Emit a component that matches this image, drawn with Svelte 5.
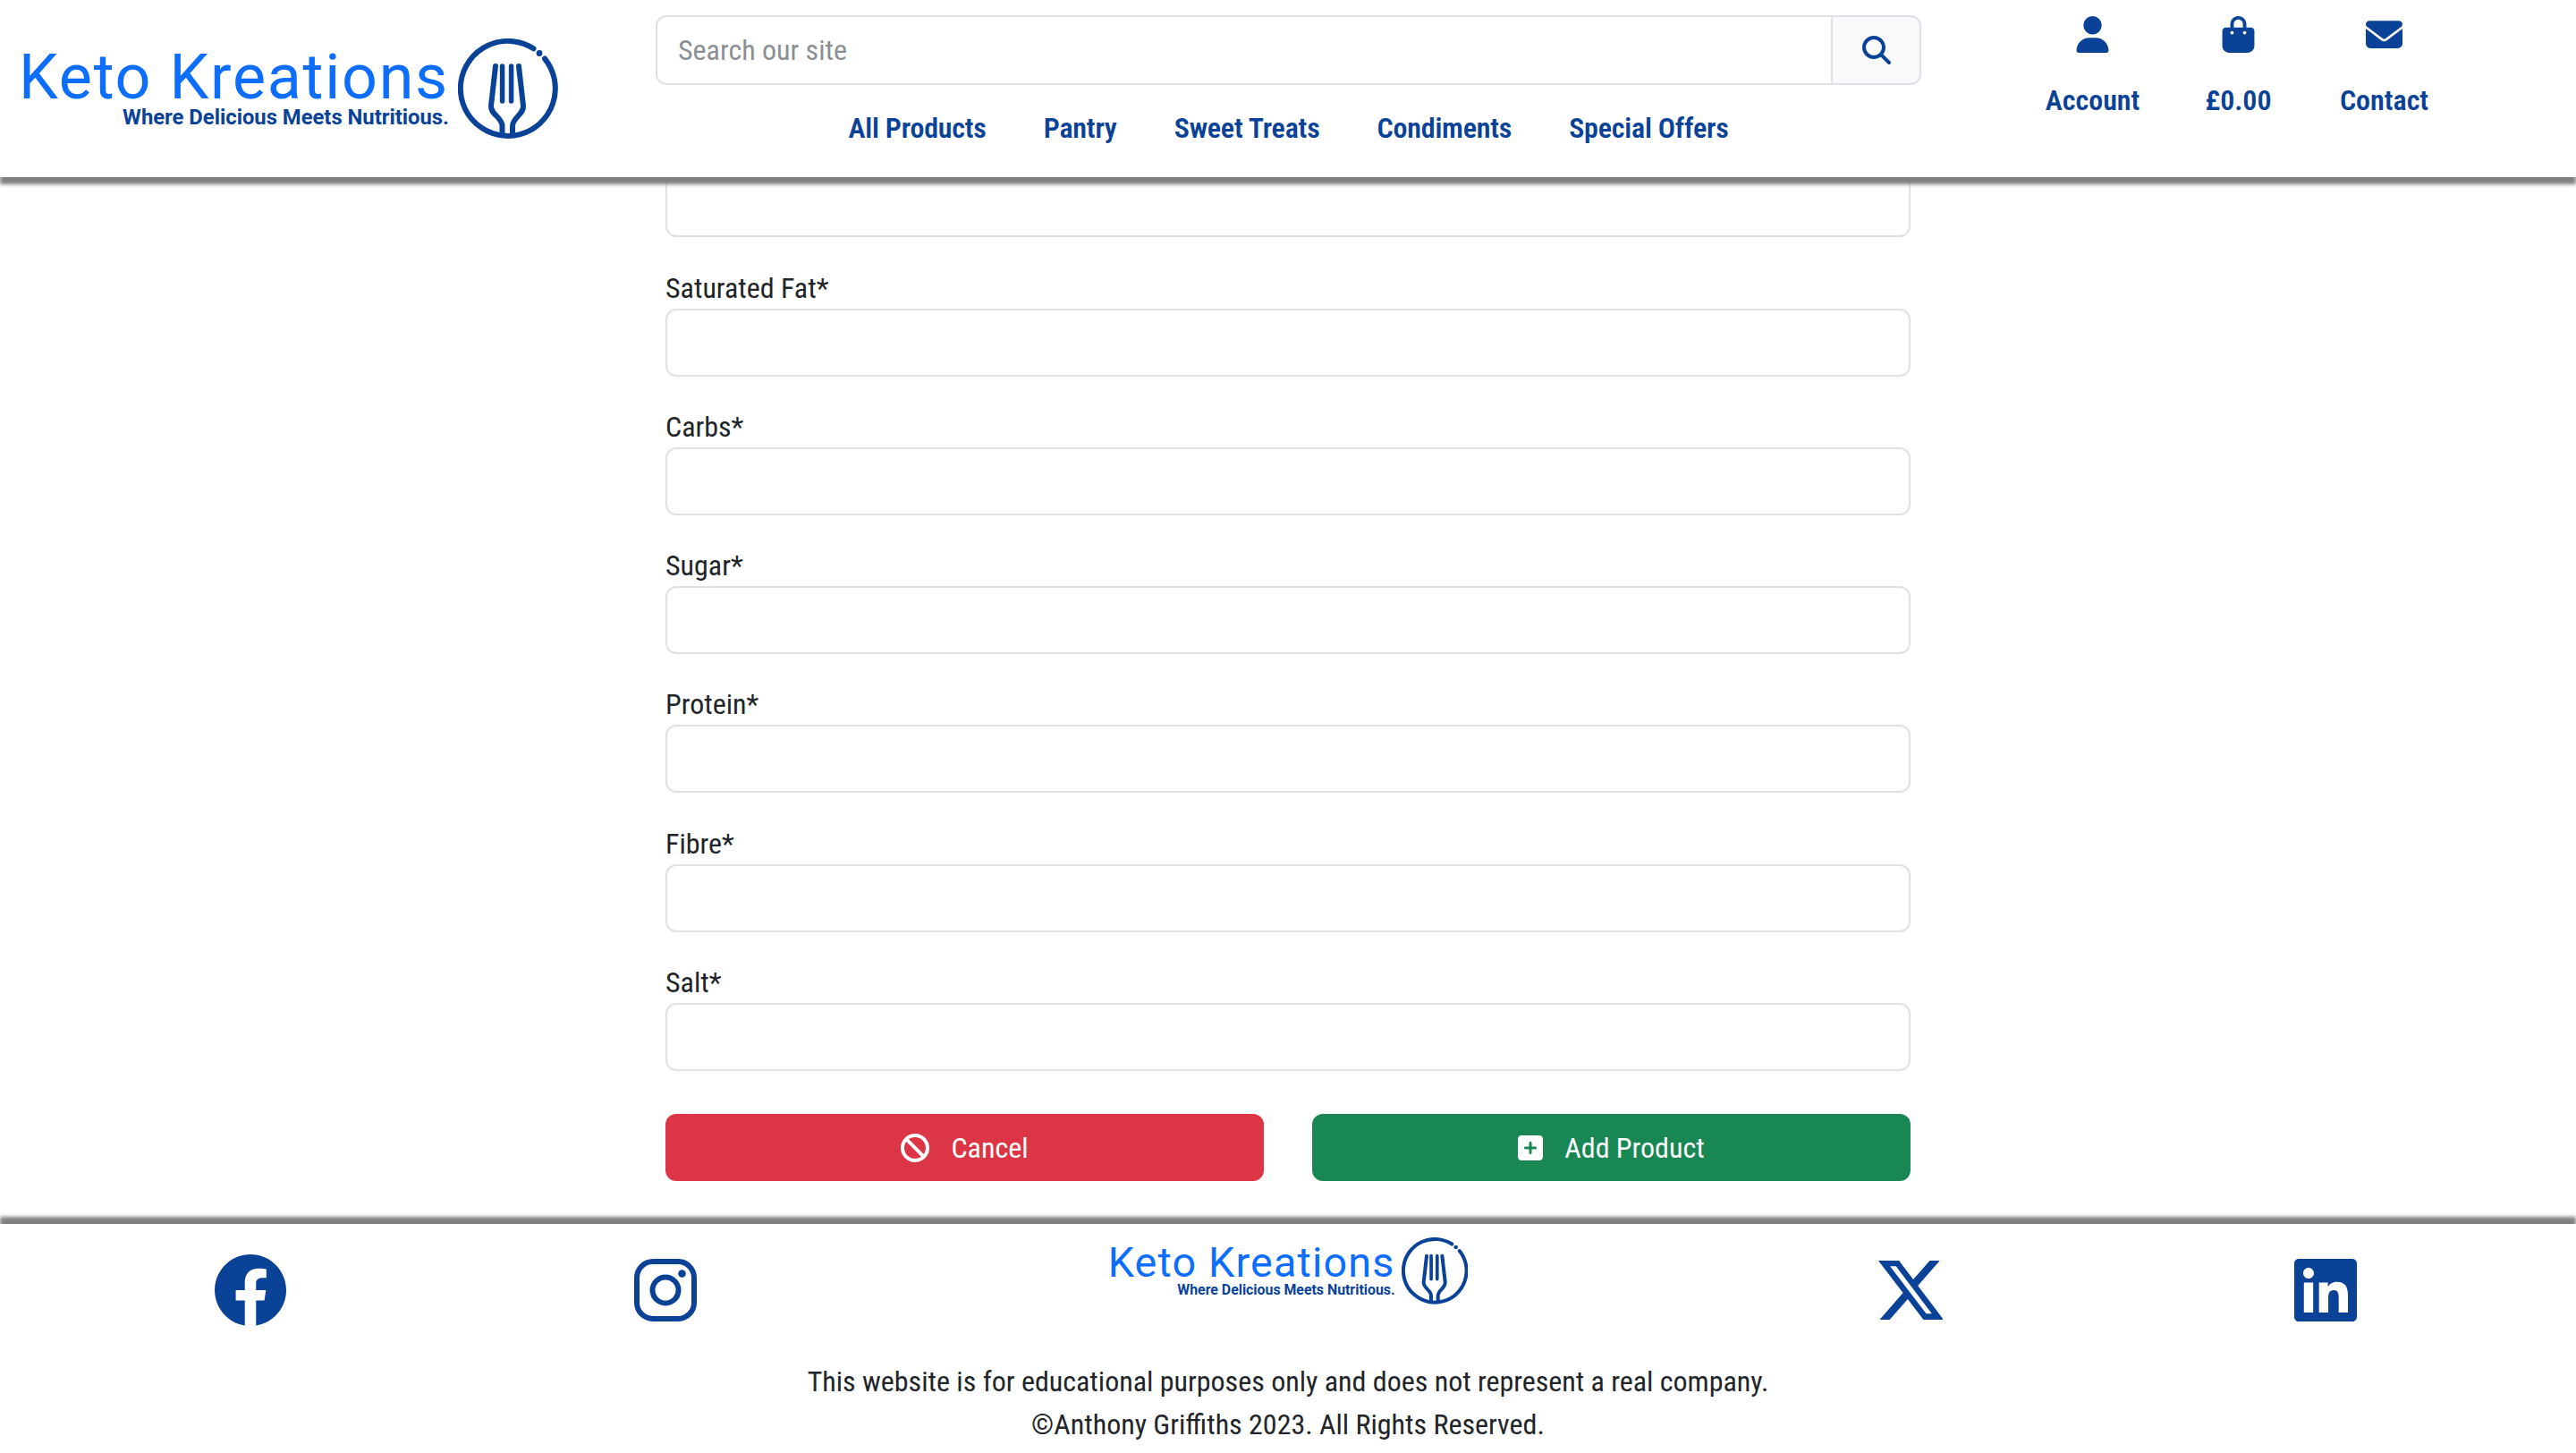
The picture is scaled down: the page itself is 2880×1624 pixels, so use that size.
<script lang="ts">
  const navLinks = ["All Products", "Pantry", "Sweet Treats", "Condiments", "Special Offers"];
  const fields = ["Saturated Fat*", "Carbs*", "Sugar*", "Protein*", "Fibre*", "Salt*"];
</script>

{#snippet logo(size)}
  <a class="logo {size}" href="#top">
    <span class="logo-text">
      <span class="logo-name">Keto Kreations</span>
      <span class="logo-tag">Where Delicious Meets Nutritious.</span>
    </span>
    <svg class="logo-mark" viewBox="0 0 112 112" aria-hidden="true">
      <g fill="none" stroke="#0a4297" stroke-linecap="round">
        <path stroke-width="6" d="M97 22.5A53 53 0 1 1 84.5 11.3" />
        <path stroke-width="6" d="M42 31 37 75C36 85 49.5 88 49.5 98V106M68 31 73 75C74 85 61 88 61 98V106" />
        <path stroke-width="5.5" d="M49.6 31V70M59.6 31V70" />
      </g>
      <circle cx="91" cy="16.5" r="3.4" fill="#0a4297" />
    </svg>
  </a>
{/snippet}

<div class="page">
  <header class="site-header">
    {@render logo("large")}
    <div class="middle">
      <form class="search" onsubmit={(e) => e.preventDefault()}>
        <input type="text" placeholder="Search our site" />
        <button type="submit" aria-label="Search">
          <svg viewBox="0 0 512 512"><path d="M416 208c0 45.9-14.9 88.3-40 122.7L502.6 457.4c12.5 12.5 12.5 32.8 0 45.3s-32.8 12.5-45.3 0L330.7 376c-34.4 25.2-76.8 40-122.7 40C93.1 416 0 322.9 0 208S93.1 0 208 0S416 93.1 416 208zM208 352a144 144 0 1 0 0-288 144 144 0 1 0 0 288z" /></svg>
        </button>
      </form>
      <nav class="main-nav">
        {#each navLinks as link}
          <a href="#top">{link}</a>
        {/each}
      </nav>
    </div>
    <div class="actions">
      <a href="#top">
        <span class="action-icon"><svg viewBox="0 0 448 512"><path d="M224 256A128 128 0 1 0 224 0a128 128 0 1 0 0 256zm-45.7 48C79.8 304 0 383.8 0 482.3C0 498.7 13.3 512 29.7 512H418.3c16.4 0 29.7-13.3 29.7-29.7C448 383.8 368.2 304 269.7 304H178.3z" /></svg></span>
        <span>Account</span>
      </a>
      <a href="#top">
        <span class="action-icon"><svg viewBox="0 0 448 512"><path d="M160 112c0-35.3 28.7-64 64-64s64 28.7 64 64v48H160V112zm-48 48H48c-26.5 0-48 21.5-48 48V416c0 53 43 96 96 96H352c53 0 96-43 96-96V208c0-26.5-21.5-48-48-48H336V112C336 50.1 285.9 0 224 0S112 50.1 112 112v48zm24 48a24 24 0 1 1 0 48 24 24 0 1 1 0-48zm152 24a24 24 0 1 1 48 0 24 24 0 1 1 -48 0z" /></svg></span>
        <span>£0.00</span>
      </a>
      <a href="#top">
        <span class="action-icon"><svg viewBox="0 0 512 512"><path d="M48 64C21.5 64 0 85.5 0 112c0 15.1 7.1 29.3 19.2 38.4L236.8 313.6c11.4 8.5 27 8.5 38.4 0L492.8 150.4c12.1-9.1 19.2-23.3 19.2-38.4c0-26.5-21.5-48-48-48H48zM0 176V384c0 35.3 28.7 64 64 64H448c35.3 0 64-28.7 64-64V176L294.4 339.2c-22.8 17.1-54 17.1-76.8 0L0 176z" /></svg></span>
        <span>Contact</span>
      </a>
    </div>
  </header>

  <main class="content">
    <form class="product-form" onsubmit={(e) => e.preventDefault()}>
      <!-- the field above this one is scrolled under the header, only its input shows -->
      <div class="field">
        <input type="text" aria-label="Fat" />
      </div>
      {#each fields as field}
        <div class="field">
          <label>
            <span>{field}</span>
            <input type="text" />
          </label>
        </div>
      {/each}
      <div class="buttons">
        <button type="button" class="btn btn-cancel">
          <svg viewBox="0 0 512 512"><path d="M367.2 412.5L99.5 144.8C77.1 176.1 64 214.5 64 256c0 106 86 192 192 192c41.5 0 79.9-13.1 111.2-35.5zm45.3-45.3C434.9 335.9 448 297.5 448 256c0-106-86-192-192-192c-41.5 0-79.9 13.1-111.2 35.5L412.5 367.2zM0 256a256 256 0 1 1 512 0A256 256 0 1 1 0 256z" /></svg>
          Cancel
        </button>
        <button type="submit" class="btn btn-add">
          <svg class="plus" viewBox="0 0 448 512"><path d="M64 32C28.7 32 0 60.7 0 96V416c0 35.3 28.7 64 64 64H384c35.3 0 64-28.7 64-64V96c0-35.3-28.7-64-64-64H64zM200 344V280H136c-13.3 0-24-10.7-24-24s10.7-24 24-24h64V168c0-13.3 10.7-24 24-24s24 10.7 24 24v64h64c13.3 0 24 10.7 24 24s-10.7 24-24 24H248v64c0 13.3-10.7 24-24 24s-24-10.7-24-24z" /></svg>
          Add Product
        </button>
      </div>
    </form>
  </main>

  <footer class="site-footer">
    <div class="footer-row">
      <a href="#top" aria-label="Facebook">
        <svg class="fb" viewBox="8 8 496 496"><path d="M504 256C504 119 393 8 256 8S8 119 8 256c0 123.78 90.69 226.38 209.25 245V327.69h-63V256h63v-54.64c0-62.15 37-96.48 93.67-96.48 27.14 0 55.52 4.84 55.52 4.84v61h-31.28c-30.8 0-40.41 19.12-40.41 38.73V256h68.78l-11 71.69h-57.78V501C413.31 482.38 504 379.78 504 256z" /></svg>
      </a>
      <a href="#top" aria-label="Instagram">
        <svg class="square" viewBox="0 0 70 70">
          <rect x="3" y="3" width="64" height="64" rx="18" fill="none" stroke="#0a4297" stroke-width="6" />
          <circle cx="35" cy="35" r="14.5" fill="none" stroke="#0a4297" stroke-width="6" />
          <circle cx="53.5" cy="16.5" r="4.3" />
        </svg>
      </a>
      <div class="footer-logo">{@render logo("small")}</div>
      <a href="#top" aria-label="X">
        <svg class="x" viewBox="1.254 2.25 21.276 19.5"><path d="M18.244 2.25h3.308l-7.227 8.26 8.502 11.24H16.17l-5.214-6.817L4.99 21.75H1.68l7.73-8.835L1.254 2.25H8.08l4.713 6.231zm-1.161 17.52h1.833L7.084 4.126H5.117z" /></svg>
      </a>
      <a href="#top" aria-label="LinkedIn">
        <svg class="square" viewBox="0 32 448 448"><path d="M416 32H31.9C14.3 32 0 46.5 0 64.3v383.4C0 465.5 14.3 480 31.9 480H416c17.6 0 32-14.5 32-32.3V64.3c0-17.8-14.4-32.3-32-32.3zM135.4 416H69V202.2h66.5V416zm-33.2-243c-21.3 0-38.5-17.3-38.5-38.5S80.9 96 102.2 96c21.2 0 38.5 17.3 38.5 38.5 0 21.3-17.2 38.5-38.5 38.5zm282.1 243h-66.4V312c0-24.8-.5-56.7-34.5-56.7-34.6 0-39.9 27-39.9 54.9V416h-66.4V202.2h63.7v29.2h.9c8.9-16.8 30.6-34.5 62.9-34.5 67.2 0 79.7 44.3 79.7 101.9V416z" /></svg>
      </a>
    </div>
    <p>This website is for educational purposes only and does not represent a real company.</p>
    <p>©Anthony Griffiths 2023. All Rights Reserved.</p>
  </footer>
</div>

<style>
  :global(body) {
    margin: 0;
    background: #fff;
  }
  .page {
    --blue: #0a4297;
    --narrow: "Roboto Condensed", "Liberation Sans Narrow", Roboto, sans-serif;
    height: 1624px;
    display: flex;
    flex-direction: column;
    overflow: hidden;
    font-family: var(--narrow);
    font-size: 32px;
    line-height: 48px;
    color: #212529;
  }
  a {
    color: inherit;
    text-decoration: none;
  }
  svg {
    display: block;
    fill: currentColor;
  }

  .site-header {
    position: relative;
    z-index: 2;
    flex: none;
    height: 198px;
    display: flex;
    background: #fff;
    box-shadow: 0 8px 4px #808080;
  }
  .logo {
    display: flex;
    align-items: center;
    gap: 0.15em;
    font-family: Roboto, sans-serif;
  }
  .logo.large {
    font-size: 70px;
    margin: 43px 0 0 21px;
    align-self: flex-start;
  }
  .logo.small {
    font-size: 46.7px;
  }
  .logo-text {
    display: flex;
    flex-direction: column;
    align-items: flex-end;
    margin-bottom: 0.06em;
  }
  .logo-name {
    color: #0d6efd;
    line-height: 1;
    letter-spacing: 0.025em;
    white-space: nowrap;
  }
  .logo-tag {
    color: var(--blue);
    font-size: 0.34em;
    font-weight: 700;
    line-height: 1;
    margin-top: -1px;
    white-space: nowrap;
  }
  .logo-mark {
    width: 1.6em;
    height: 1.6em;
    flex: none;
  }

  .middle {
    position: absolute;
    left: 733px;
    width: 1415px;
    top: 17px;
  }
  .search {
    display: flex;
    height: 78px;
  }
  .search input {
    flex: 1;
    min-width: 0;
    box-sizing: border-box;
    padding: 0 23px;
    border: 2px solid #dee2e6;
    border-radius: 12px 0 0 12px;
    font: inherit;
    color: #212529;
    outline: none;
  }
  .search input::placeholder {
    color: #8a8f94;
  }
  .search button {
    width: 101px;
    margin-left: -2px;
    display: flex;
    align-items: center;
    justify-content: center;
    padding: 0;
    background: #f8f9fa;
    border: 2px solid #dee2e6;
    border-radius: 0 12px 12px 0;
    color: var(--blue);
  }
  .search svg {
    width: 32px;
    height: 32px;
  }
  .main-nav {
    display: flex;
    justify-content: center;
    gap: 64px;
    margin-top: 24px;
    color: var(--blue);
    font-weight: 600;
    letter-spacing: -0.2px;
  }

  .actions {
    position: absolute;
    left: 2258px;
    top: 18px;
    display: grid;
    grid-template-columns: repeat(3, 163px);
    color: var(--blue);
    font-weight: 600;
    text-align: center;
  }
  .actions a {
    display: flex;
    flex-direction: column;
    align-items: center;
    gap: 29px;
  }
  .action-icon {
    height: 41px;
    display: flex;
    align-items: center;
  }
  .action-icon svg {
    width: 41px;
    height: 41px;
  }

  .content {
    flex: 1;
    min-height: 0;
    overflow: hidden;
    display: flex;
    flex-direction: column;
    justify-content: flex-end;
    align-items: center;
  }
  .product-form {
    width: 1392px;
    flex: none;
    padding-bottom: 48px;
  }
  .field {
    margin-bottom: 31.3px;
  }
  .field label {
    display: block;
  }
  .field span {
    display: block;
    line-height: 50px;
    margin-bottom: -2px;
  }
  .field input {
    display: block;
    box-sizing: border-box;
    width: 100%;
    height: 76px;
    border: 2px solid #dee2e6;
    border-radius: 12px;
    background: #fff;
    outline: none;
  }
  .buttons {
    display: grid;
    grid-template-columns: 1fr 1fr;
    gap: 54px;
    margin-top: 48px;
  }
  .btn {
    height: 75px;
    display: flex;
    align-items: center;
    justify-content: center;
    gap: 24px;
    border: 0;
    border-radius: 12px;
    color: #fff;
    font: inherit;
  }
  .btn svg {
    width: 32px;
    height: 32px;
  }
  .btn svg.plus {
    width: 28px;
  }
  .btn-cancel {
    background: #dc3545;
  }
  .btn-add {
    background: #198754;
  }

  .site-footer {
    position: relative;
    z-index: 1;
    flex: none;
    height: 256px;
    box-sizing: border-box;
    padding: 0 48px;
    background: #fff;
    box-shadow: 0 -8px 4px #808080;
    text-align: center;
  }
  .footer-row {
    height: 148px;
    margin-bottom: 4px;
    display: grid;
    grid-template-columns: 1fr 1fr 2fr 1fr 1fr;
    align-items: center;
    justify-items: center;
    color: var(--blue);
  }
  .fb {
    width: 80px;
    height: 80px;
  }
  .square {
    width: 70px;
    height: 70px;
  }
  .x {
    width: 72px;
    height: 66px;
  }
  .footer-logo {
    align-self: start;
    margin-top: 15px;
  }
  .site-footer p {
    margin: 0;
  }
</style>
